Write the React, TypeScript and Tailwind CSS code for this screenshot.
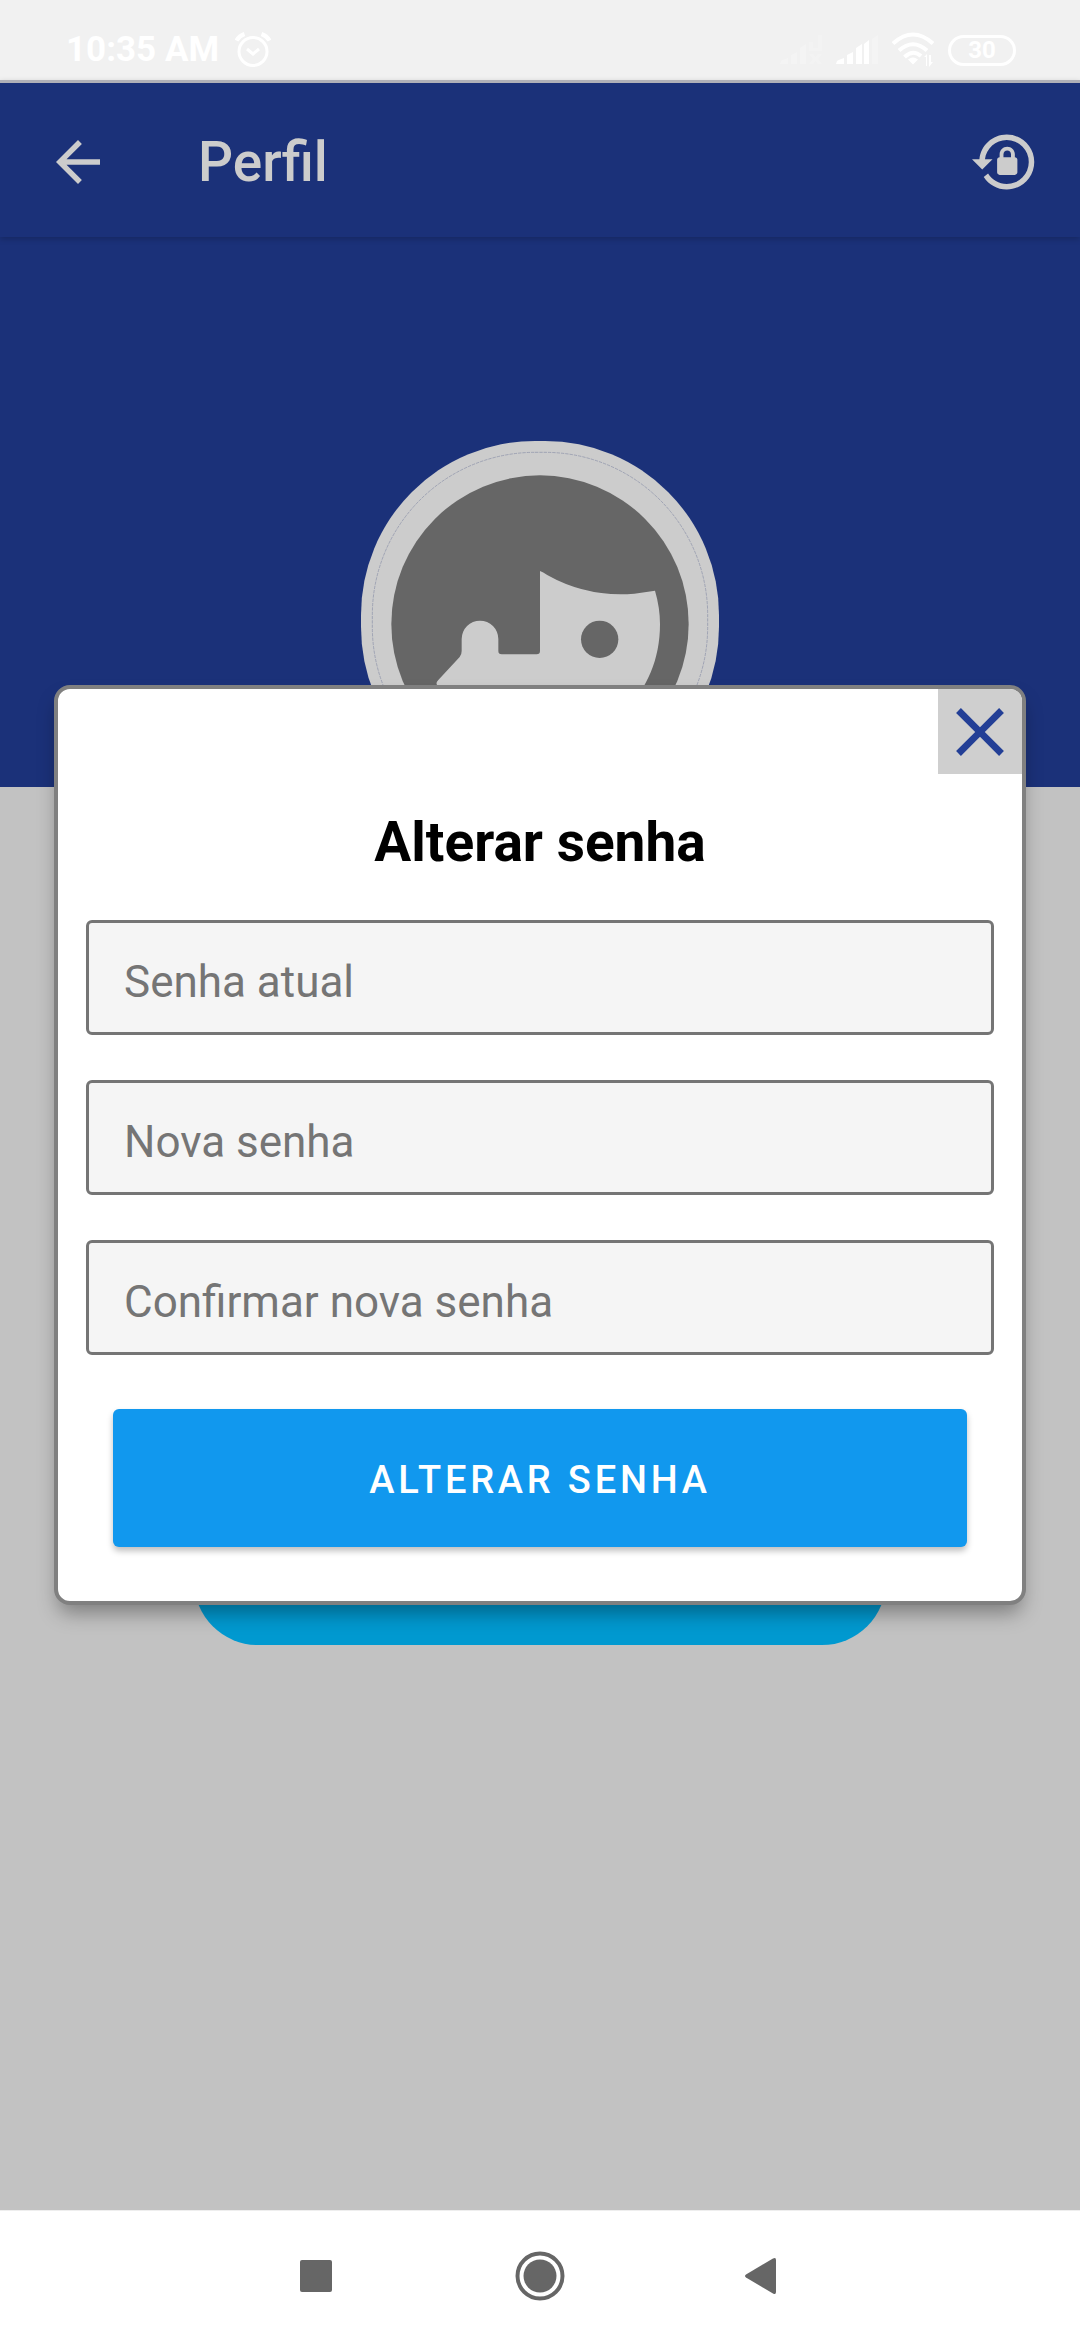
import { useState, type FormEvent } from "react";
import { MdArrowBack, MdClose } from "react-icons/md";

interface PasswordFieldProps {
  readonly label: string;
  readonly value: string;
  readonly onChange: (value: string) => void;
}

function PasswordField({ label, value, onChange }: PasswordFieldProps) {
  return (
    <input
      type="password"
      aria-label={label}
      value={value}
      onChange={(e) => onChange(e.target.value)}
      placeholder={label}
      className="block h-[115px] w-full rounded-md border-3 border-[#757575] bg-[#f5f5f5] px-[35px] pt-2 text-[44px] text-black outline-none placeholder:text-[#757575]"
    />
  );
}

function AlarmIcon() {
  return (
    <svg viewBox="0 0 36 36" className="size-9" fill="none" stroke="#fff" strokeWidth="3" aria-hidden="true">
      <circle cx="18" cy="19.500" r="14" />
      <path d="M12 17l6 5 6-5" />
      <path d="M1.500 8.500Q4 4 9.500 2M34.500 8.500Q32 4 26.500 2" strokeWidth="4" />
    </svg>
  );
}

function SignalIcon({ muted }: Readonly<{ muted?: boolean }>) {
  return (
    <svg viewBox="0 0 44 32" className="h-8 w-11" fill="#fff" aria-hidden="true">
      <g opacity={muted ? 0.25 : 1}>
        <path d="M0 30l1-3q1-1 7-3v6z" />
        <path d="M11 21l6-3v12h-6z" />
        <path d="M20 14l6-4v20h-6z" />
        {!muted && <path d="M28 10l5-4v24h-5z" />}
      </g>
      {muted ? (
        <g opacity="0.2">
          <path d="M29 8h4v6h5V1h4v16H29z" />
          <path d="M29 20l4 0 2.500 3 2.500-3h4l-4 5 4 5h-4l-2.500-3-2.500 3h-4l4-5z" />
        </g>
      ) : (
        <path d="M36 5l6-4v29h-6z" opacity="0.25" />
      )}
    </svg>
  );
}

function WifiIcon() {
  return (
    <svg viewBox="0 0 44 36" className="h-9 w-11" fill="none" stroke="#fff" strokeWidth="4" aria-hidden="true">
      <path d="M1 11.500Q21-6.500 41 11.500" />
      <path d="M7 18.500Q21 6 35 18.500" />
      <path d="M12.500 25Q21 17 29 24" />
      <path d="M16 27.500q5-4 10 0l-5 5z" fill="#fff" stroke="none" />
      <path d="M34 34V25h-2l3-3v12zM37 23v12l4-5h-2v-7z" fill="#fff" stroke="none" />
    </svg>
  );
}

function LockResetIcon() {
  return (
    <svg viewBox="0 0 24 24" className="size-[66px]" fill="currentColor" aria-hidden="true">
      <path d="M12.630 2C18.160 2 22.640 6.500 22.640 12S18.160 22 12.630 22C9.120 22 6.050 20.180 4.260 17.430L5.840 16.180C7.250 18.470 9.760 20 12.640 20A8 8 0 0 0 20.640 12 8 8 0 0 0 12.640 4C8.560 4 5.200 7.060 4.710 11H7.470L3.730 14.730 0 11H2.690C3.190 5.950 7.450 2 12.630 2M15.590 10.240C16.090 10.250 16.500 10.650 16.500 11.160V15.770C16.500 16.270 16.090 16.690 15.580 16.690H10.050C9.540 16.690 9.130 16.270 9.130 15.770V11.160C9.130 10.650 9.540 10.250 10.040 10.240V9.230C10.040 7.700 11.290 6.460 12.810 6.460 14.340 6.460 15.590 7.700 15.590 9.230V10.240M12.810 7.860C12.060 7.860 11.440 8.470 11.440 9.230V10.240H14.190V9.230C14.190 8.470 13.570 7.860 12.810 7.860Z" />
    </svg>
  );
}

function Avatar() {
  return (
    <svg viewBox="0 0 1074 1080" className="h-[360px] w-[358px]" role="img" aria-label="Foto de perfil">
      <rect width="1074" height="1080" rx="522" fill="#cccccc" />
      <rect x="34" y="34" width="1006" height="1012" rx="488" fill="none" stroke="#8a8fa8" strokeWidth="2" strokeDasharray="10 3" />
      <circle cx="537" cy="549" r="446" fill="#666666" />
      {/* face and hair cut */}
      <path
        d="M537 390Q545 393 560 403Q680 470 820 458L882 449Q897 500 897 550C897 760 740 905 537 905C380 905 280 820 230 735Q222 726 232 717L296 648Q302 641 302 630V594A55 55 0 0 1 412 594V630Q412 640 422 640H527Q537 640 537 630Z"
        fill="#cccccc"
      />
      <circle cx="716" cy="595" r="56" fill="#666666" />
    </svg>
  );
}

function StatusBar() {
  return (
    <div className="flex h-20 shrink-0 items-center justify-between bg-[#f1f1f1] pt-5 pr-16 pl-[66px] text-white">
      <div className="flex items-center gap-4">
        <span className="text-[35px] leading-10 font-bold">10:35 AM</span>
        <AlarmIcon />
      </div>
      <div className="flex items-center gap-3">
        <SignalIcon muted />
        <SignalIcon />
        <WifiIcon />
        <span className="flex h-[31px] w-[68px] items-center justify-center rounded-full border-3 border-white text-2xl font-bold">
          30
        </span>
      </div>
    </div>
  );
}

function NavigationBar() {
  return (
    <nav className="flex h-[130px] shrink-0 justify-center border-t border-[#eeeeee] bg-white text-[#666666]">
      <button aria-label="Recentes" className="flex w-56 items-center justify-center">
        <span className="size-8 rounded-xs bg-current" />
      </button>
      <button aria-label="Início" className="flex w-56 items-center justify-center">
        <svg viewBox="0 0 50 50" className="size-[50px]" aria-hidden="true">
          <circle cx="25" cy="25" r="22.500" fill="none" stroke="currentColor" strokeWidth="4" />
          <circle cx="25" cy="25" r="16.500" fill="currentColor" />
        </svg>
      </button>
      <button aria-label="Voltar" className="flex w-56 items-center justify-center">
        <svg viewBox="0 0 38 38" className="size-[38px]" fill="currentColor" aria-hidden="true">
          <path d="M1 17.500L28 1.500Q31 0 31 3V35Q31 38 28 36.500L1 20.500Q-1 19 1 17.500Z" />
        </svg>
      </button>
    </nav>
  );
}

export default function App() {
  const [open, setOpen] = useState(true);
  const [current, setCurrent] = useState("");
  const [next, setNext] = useState("");
  const [confirm, setConfirm] = useState("");

  const handleSubmit = (e: FormEvent) => {
    e.preventDefault();
    if (next !== "" && next === confirm) setOpen(false);
  };

  return (
    <div className="flex min-h-screen flex-col bg-[#c2c2c2] font-[Roboto,sans-serif]">
      <StatusBar />

      <div className="relative flex flex-1 flex-col">
        <header className="relative flex h-[157px] items-center border-t-3 border-[#b0b0b8] bg-[#1b3179] pt-1 pr-[42px] pl-[45px] text-[#cccccc] shadow-[0_2px_6px_rgba(0,0,0,0.2)]">
          <button aria-label="Voltar para o início">
            <MdArrowBack className="size-[66px]" />
          </button>
          <h1 className="ml-[87px] flex-1 text-[55px] leading-16 font-medium">Perfil</h1>
          <button aria-label="Redefinir senha" onClick={() => setOpen(true)}>
            <LockResetIcon />
          </button>
        </header>

        <main className="flex flex-1 flex-col items-center">
          <div className="flex h-[550px] w-full justify-center bg-[#1b3179] pt-[204px]">
            <Avatar />
          </div>
          <button
            aria-label="Salvar perfil"
            className="mt-[720px] h-[138px] w-[64%] rounded-[64px] bg-[#0099d0]"
          />
        </main>

        {open && (
          <div className="absolute inset-0 flex items-center justify-center">
            <div
              role="dialog"
              aria-modal="true"
              aria-labelledby="dialog-title"
              className="w-[90%] rounded-2xl border-4 border-[#808080] bg-white shadow-[0_12px_20px_-4px_rgba(0,0,0,0.35)]"
            >
              <div className="flex justify-end">
                <button
                  aria-label="Fechar"
                  onClick={() => setOpen(false)}
                  className="flex h-[85px] w-[84px] items-center justify-center rounded-tr-xl bg-[#cfcfcf] text-[#233f96]"
                >
                  <MdClose className="size-[82px]" />
                </button>
              </div>
              <form onSubmit={handleSubmit} className="px-7 pb-[54px]">
                <h2 id="dialog-title" className="mt-9 text-center text-[55px] leading-16 font-bold text-black">
                  Alterar senha
                </h2>
                <div className="mt-[46px] flex flex-col gap-[45px]">
                  <PasswordField label="Senha atual" value={current} onChange={setCurrent} />
                  <PasswordField label="Nova senha" value={next} onChange={setNext} />
                  <PasswordField label="Confirmar nova senha" value={confirm} onChange={setConfirm} />
                </div>
                <div className="mt-[54px] px-[27px]">
                  <button
                    type="submit"
                    className="h-[138px] w-full rounded-md bg-[#1198ee] pt-1 text-[38px] font-medium tracking-widest text-white uppercase shadow-[0_4px_6px_rgba(0,0,0,0.25)]"
                  >
                    Alterar senha
                  </button>
                </div>
              </form>
            </div>
          </div>
        )}
      </div>

      <NavigationBar />
    </div>
  );
}
